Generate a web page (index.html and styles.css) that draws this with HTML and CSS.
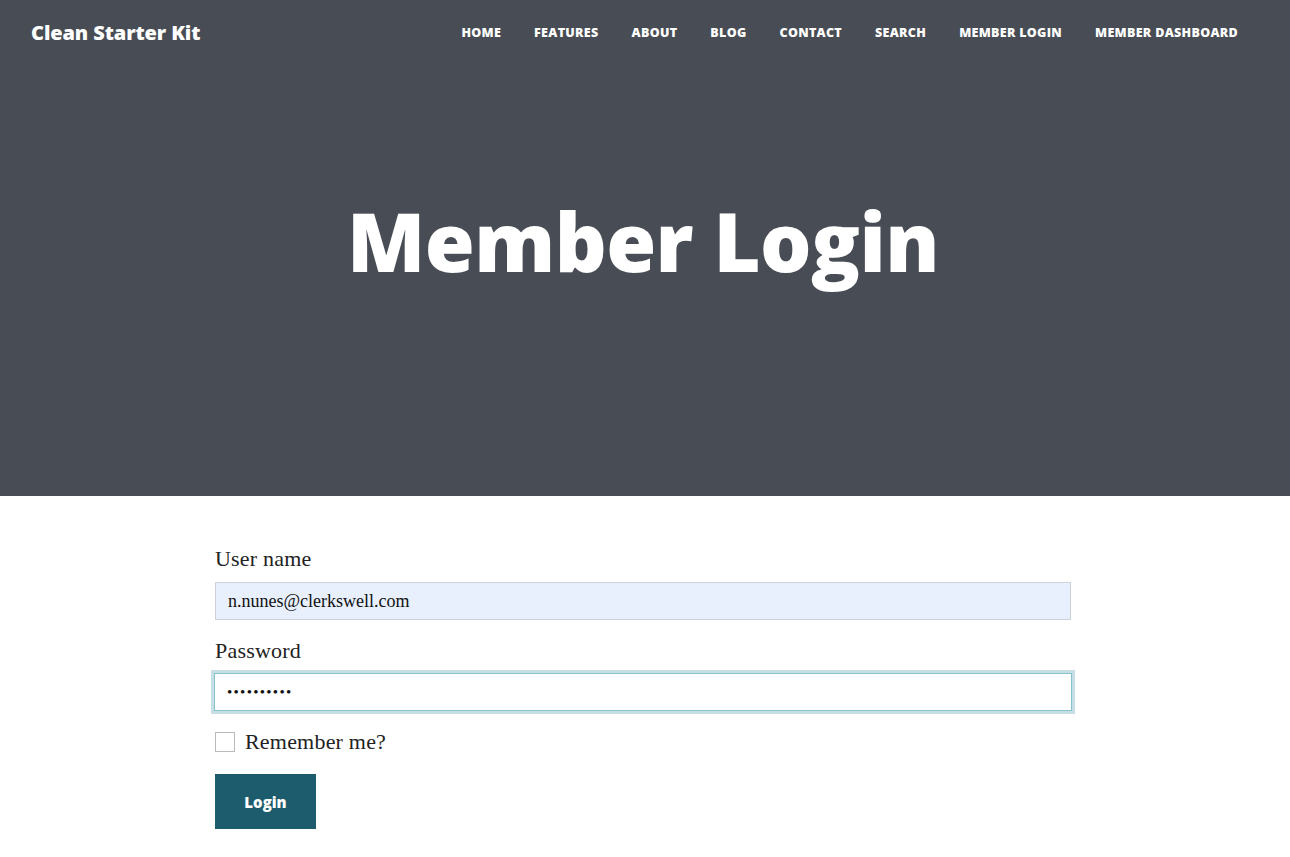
FILE: index.html
```html
<!DOCTYPE html>
<html lang="en">
<head>
<meta charset="utf-8">
<title>Member Login</title>
<link rel="stylesheet" href="styles.css">
</head>
<body>
<header class="hero">
  <nav class="topbar">
    <a class="brand" href="#">Clean Starter Kit</a>
    <ul class="menu">
      <li><a href="#">Home</a></li>
      <li><a href="#">Features</a></li>
      <li><a href="#">About</a></li>
      <li><a href="#">Blog</a></li>
      <li><a href="#">Contact</a></li>
      <li><a href="#">Search</a></li>
      <li><a href="#">Member Login</a></li>
      <li><a href="#">Member Dashboard</a></li>
    </ul>
  </nav>
  <h1 class="title">Member Login</h1>
</header>
<main class="content">
  <form class="login">
    <label class="label" for="user">User name</label>
    <input class="field autofill" id="user" type="text" value="n.nunes@clerkswell.com">
    <label class="label" for="pass">Password</label>
    <div class="focus-ring"><input class="field focused" id="pass" type="password" value="secretpass"></div>
    <label class="check"><span class="box"></span>Remember me?</label>
    <button class="btn" type="button">Login</button>
  </form>
</main>
</body>
</html>
```

FILE: styles.css
```css
* { box-sizing: border-box; }
html, body { margin: 0; padding: 0; background: #fff; }
body { font-family: "Liberation Serif", "DejaVu Serif", serif; color: #222; }

.hero {
  background: #484c54;
  height: 496px;
  display: flex;
  flex-direction: column;
}
.topbar {
  display: flex;
  align-items: center;
  justify-content: space-between;
  height: 64px;
  padding: 0 52px 0 31px;
}
.brand {
  font-family: "Open Sans", sans-serif;
  font-weight: 800;
  font-size: 20px;
  color: #fff;
  text-decoration: none;
  letter-spacing: -0.1px;
}
.menu {
  list-style: none;
  margin: 0;
  padding: 0;
  display: flex;
  gap: 33px;
}
.menu a {
  font-family: "Open Sans", sans-serif;
  font-weight: 800;
  font-size: 12.5px;
  text-transform: uppercase;
  letter-spacing: 0.3px;
  color: #fff;
  text-decoration: none;
}
.title {
  margin: 129px 0 0;
  padding-right: 4px;
  text-align: center;
  font-family: "Open Sans", sans-serif;
  font-weight: 800;
  font-size: 81px;
  line-height: 96px;
  color: #fff;
  letter-spacing: -0.6px;
}

.content {
  padding: 50px 0 28px 215px;
}
.login {
  width: 856px;
  display: flex;
  flex-direction: column;
}
.label {
  font-size: 22px;
  line-height: 26px;
  letter-spacing: 0.2px;
  color: #222;
  margin-bottom: 10px;
}
.field {
  display: block;
  width: 100%;
  height: 38px;
  padding: 0 12px;
  font-family: "Liberation Serif", serif;
  font-size: 18px;
  color: #111;
  border: 1px solid #cdd2da;
  outline: none;
  background: #fff;
}
.autofill { background: #e8f0fe; margin-bottom: 18px; }
.focus-ring {
  margin: -4px -4px 15px;
  padding: 3px;
  background: #c6dfe5;
}
.focused { border: 1px solid #86c2cd; height: 38px; font-size: 15px; letter-spacing: 1.3px; }
.check {
  display: flex;
  align-items: center;
  gap: 10px;
  font-size: 22px;
  line-height: 26px;
  letter-spacing: 0.2px;
  color: #222;
  margin-bottom: 19px;
}
.box {
  width: 20px;
  height: 20px;
  border: 1px solid #bbb;
  background: #fff;
}
.btn {
  width: 101px;
  height: 55px;
  border: 0;
  background: #1d5c6c;
  color: #fff;
  font-family: "Open Sans", sans-serif;
  font-weight: 800;
  font-size: 15px;
  cursor: pointer;
}
```
